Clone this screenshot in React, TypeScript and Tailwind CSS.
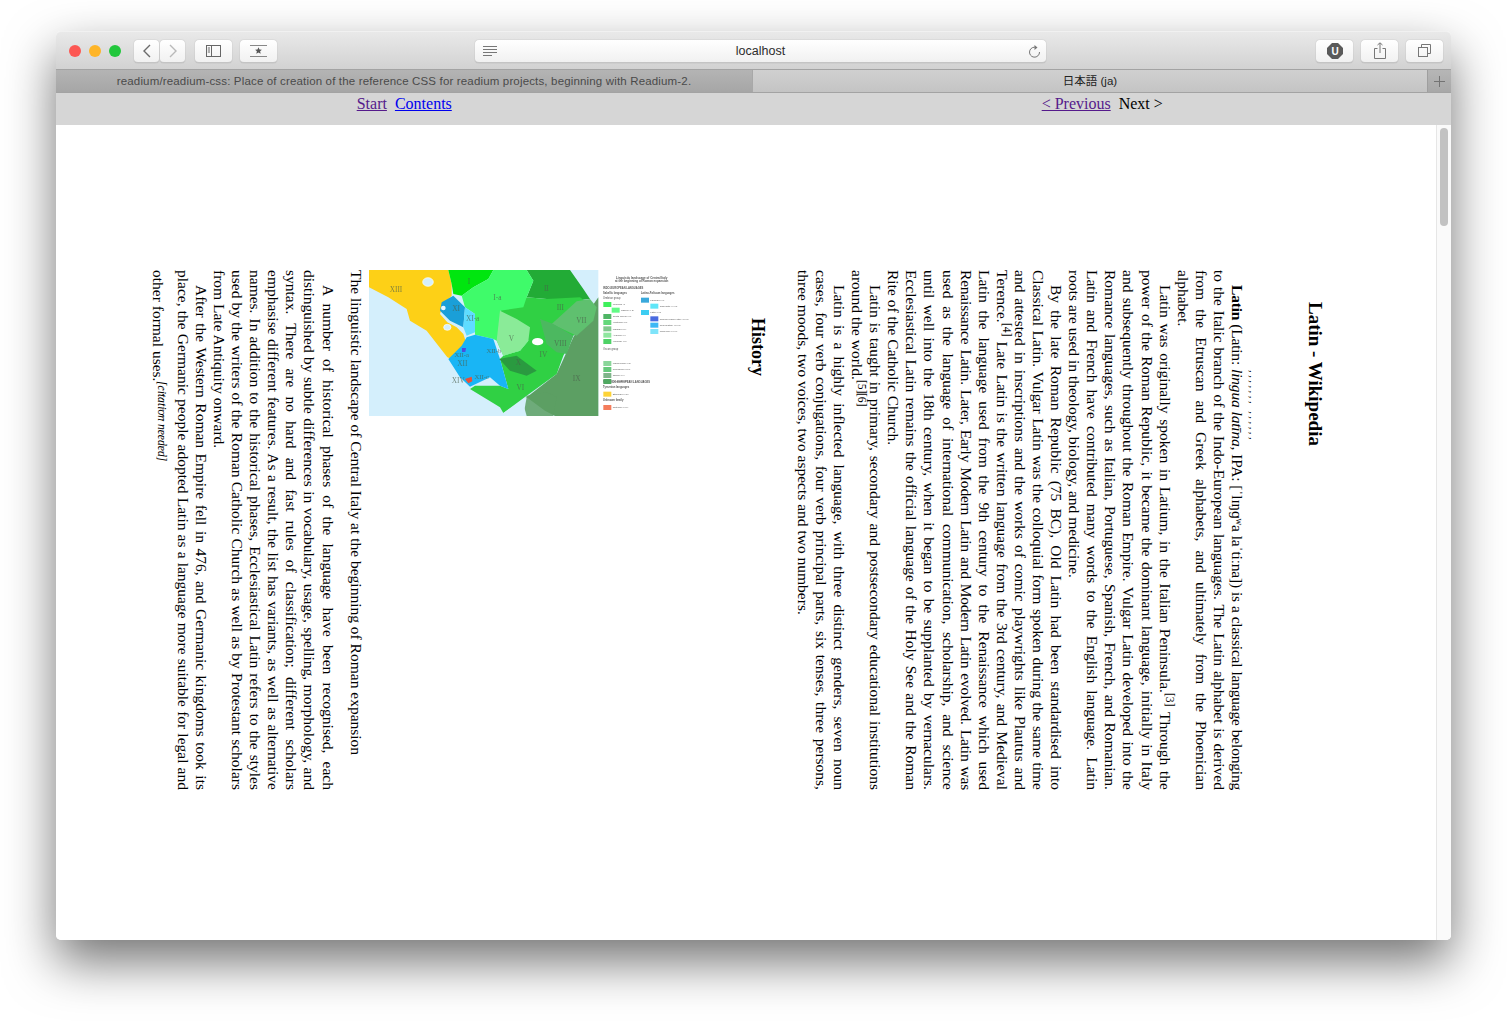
import React from 'react'

// one typeset line of the vertical text
function L({ children, indent, plain, className }: { children: React.ReactNode; indent?: boolean; plain?: boolean; className?: string }) {
  return (
    <div className={`${indent ? '[text-indent:15px]' : ''} ${plain ? '' : '[text-align-last:justify]'} ${className ?? ''}`}>
      {children}
    </div>
  )
}

function Ref({ children }: { children: React.ReactNode }) {
  return <sup className="top-0 left-[4px]">{children}</sup>
}

function ToolButton({ children, className }: { children: React.ReactNode; className?: string }) {
  return (
    <div className={`flex h-[23px] items-center justify-center rounded-[4px] border-b border-[#c4c4c4] bg-gradient-to-b from-white to-[#f1f1f1] shadow-[0_0_1px_rgba(0,0,0,0.35)] ${className ?? ''}`}>
      {children}
    </div>
  )
}

const legendRows: [number, number, string, string][] = [
  [730, 122, '#3ff05c', 'Umbrian (I)'],
  [755, 139, '#62fb86', 'Sabine (I-a)'],
  [730, 158, '#4fb565', 'South Picene (II)'],
  [730, 176, '#63d87a', 'Vestinian (III)'],
  [730, 195, '#7fc98c', 'Marsian (IV)'],
  [730, 214, '#8fe69f', 'Aequian (V)'],
  [730, 233, '#4ed266', 'Volscian (VI)'],
  [730, 299, '#8ad69a', 'Marrucinian (VII)'],
  [730, 317, '#66c97c', 'Paelignian (VIII)'],
  [730, 335, '#7fb58a', 'Oscan (IX)'],
  [730, 353, '#4fa861', 'Hernican (X)'],
  [730, 391, '#fdd338', 'Etruscan (XIII)'],
  [730, 431, '#f47c5c', 'Rutulian (XIV)'],
  [843, 109, '#3aa9dc', 'Faliscan (XI)'],
  [871, 127, '#5fe6f8', 'Capenate (XI-a)'],
  [843, 146, '#3dcdf2', 'Latin (XII)'],
  [871, 165, '#4a6be0', 'Roman urban Latin (XII-a)'],
  [871, 184, '#3db8f5', 'Praenestine (XII-b)'],
  [871, 203, '#7fe4fa', 'Lanuvian (XII-c)'],
]

const mapLabels: [number, number, string, number][] = [
  [327, 60, 'I', 22], [108, 85, 'XIII', 22], [412, 108, 'I-a', 22], [559, 80, 'II', 22], [601, 138, 'III', 22],
  [664, 178, 'VII', 22], [288, 140, 'XI', 22], [338, 170, 'XI-a', 22], [454, 230, 'V', 22], [601, 247, 'VIII', 22],
  [550, 280, 'IV', 22], [402, 268, 'XII-b', 20], [305, 280, 'XII-a', 20], [307, 306, 'XII', 22], [475, 303, 'X', 22],
  [650, 350, 'IX', 22], [365, 344, 'XII-c', 20], [481, 378, 'VI', 22], [295, 358, 'XIV', 22],
]

// the map of Central Italy from the article
function LatiumMap() {
  return (
    <svg width="324" height="146" viewBox="27 18 972 438" className="block h-[146px] w-[324px] blur-[0.5px] [writing-mode:horizontal-tb]">
      <rect x="27" y="18" width="972" height="438" fill="#ffffff" />
      <rect x="27" y="18" width="688" height="438" fill="#d4effc" />
      <polygon fill="#5c9f63" points="715,100 715,456 585,456 555,440 500,400 590,330 640,220 680,150" />
      <polygon fill="#22ab36" points="500,18 630,18 670,75 690,105 640,110 560,105 500,100 520,50" />
      <polygon fill="#30d044" points="500,100 560,105 660,100 700,130 690,170 640,215 610,275 590,330 500,395 430,447 420,430 330,375 345,365 420,365 445,375 420,285 430,275 480,260 505,230 420,140" />
      <polygon fill="#5fc06f" points="650,112 690,105 710,130 700,170 650,215 575,180" />
      <polygon fill="#4cb860" points="540,165 580,180 640,215 620,270 590,265 560,240" />
      <polygon fill="#5c9f63" points="500,395 560,385 590,400 580,456 500,456 490,420" opacity="0.85" />
      <polygon fill="#d4effc" points="430,447 500,400 490,456 430,456" />
      <polygon fill="#fdd017" points="27,18 265,18 275,60 275,95 250,120 240,150 262,175 290,190 310,210 320,240 300,260 275,285 262,280 200,200 150,170 140,135 85,100 27,70" />
      <polygon fill="#00e60f" points="265,18 400,18 385,45 340,70 305,95 280,90 275,60" />
      <polygon fill="#3ffb6a" points="400,18 500,18 520,50 500,100 490,130 420,140 505,230 480,260 430,275 410,230 400,225 345,212 345,150 315,130 305,95 340,70 385,45" />
      <polygon fill="#8aeb98" points="420,140 470,165 510,190 505,230 480,260 430,275 410,230" />
      <polygon fill="#1a9fd8" points="245,115 280,95 315,130 310,190 270,170 240,140" />
      <polygon fill="#5fdcff" points="315,130 345,150 345,205 320,215 310,190" />
      <polygon fill="#19b5f5" points="320,220 345,212 400,225 420,285 445,375 420,365 390,340 330,368 300,340 265,285 305,245" />
      <polygon fill="#2a9a40" points="418,285 470,275 530,320 500,335 450,320" />
      <polygon fill="#e8503a" points="315,345 335,338 337,352 325,358" />
      <polygon fill="#4a4fe0" points="306,252 318,252 316,264 306,264" />
      <ellipse cx="204" cy="54" rx="16" ry="13" fill="#d4effc" stroke="#ffffff" strokeWidth="2" />
      <ellipse cx="262" cy="190" rx="11" ry="9" fill="#d4effc" stroke="#ffffff" strokeWidth="2" />
      <ellipse cx="250" cy="132" rx="7" ry="7" fill="#e8f8ff" />
      <ellipse cx="533" cy="233" rx="17" ry="11" fill="#ffffff" />
      <g fontFamily="'Liberation Serif', serif" fill="#4b5f4b" fillOpacity="0.7" textAnchor="middle">
        {mapLabels.map(([x, y, t, s]) => (
          <text key={t} x={x} y={y} fontSize={s}>{t}</text>
        ))}
      </g>
      <g fontFamily="'Liberation Sans', sans-serif" fill="#555555" fontSize="8">
        <text x="845" y="45" textAnchor="middle" fontWeight="700" fontSize="9">Linguistic landscape of Central Italy</text>
        <text x="845" y="54" textAnchor="middle" fontWeight="700" fontSize="9">at the beginning of Roman expansion</text>
        <text x="729" y="76" fontWeight="700">INDO-EUROPEAN LANGUAGES</text>
        <text x="729" y="89" fontWeight="700">Sabellic languages</text>
        <text x="843" y="89" fontWeight="700">Latino-Faliscan languages</text>
        <text x="729" y="104">Umbrian group</text>
        <text x="729" y="257">Oscan group</text>
        <text x="729" y="358" fontWeight="700">NON-INDO-EUROPEAN LANGUAGES</text>
        <text x="729" y="372" fontWeight="700">Tyrsenian languages</text>
        <text x="729" y="412" fontWeight="700">Unknown family</text>
        {legendRows.map(([x, y, c, t]) => (
          <g key={t}>
            <rect x={x} y={y - 8} width="24" height="15" fill={c} />
            <text x={x + 28} y={y + 2} fontSize="7.5">{t}</text>
          </g>
        ))}
      </g>
    </svg>
  )
}

export default function App() {
  return (
    <div className="h-[1021px] overflow-hidden bg-white pl-[56px] pt-[31px] font-['Liberation_Sans',sans-serif]">
      <div className="flex h-[909px] w-[1395px] flex-col rounded-[5px] bg-white shadow-[0_22px_50px_0_rgba(0,0,0,0.55)]">
        {/* toolbar */}
        <div className="flex h-[38px] flex-none items-center rounded-t-[5px] border-t border-[#f1f1f1] bg-gradient-to-b from-[#e9e9e9] to-[#d2d2d2] pl-[13px] pr-[8px] pt-[1px]">
          <div className="-mt-[1px] flex gap-[8px]">
            <span className="h-[12px] w-[12px] rounded-full bg-[#fc5753]" />
            <span className="h-[12px] w-[12px] rounded-full bg-[#feb528]" />
            <span className="h-[12px] w-[12px] rounded-full bg-[#22c73c]" />
          </div>
          <ToolButton className="ml-[13px] w-[25px]">
            <svg width="10" height="14" viewBox="0 0 10 14" fill="none" stroke="#6b6b6b" strokeWidth="1.4"><path d="M8 1 2 7l6 6" /></svg>
          </ToolButton>
          <ToolButton className="ml-[1px] w-[25px]">
            <svg width="10" height="14" viewBox="0 0 10 14" fill="none" stroke="#b9b9b9" strokeWidth="1.4"><path d="m2 1 6 6-6 6" /></svg>
          </ToolButton>
          <ToolButton className="ml-[10px] w-[37px]">
            <svg width="15" height="12" viewBox="0 0 15 12" fill="none" stroke="#666666"><rect x="0.5" y="0.5" width="14" height="11" /><path d="M5.5 0.5v11M1.8 3h2.2M1.8 5h2.2M1.8 7h2.2" /></svg>
          </ToolButton>
          <ToolButton className="ml-[8px] w-[37px]">
            <svg width="17" height="12" viewBox="0 0 17 12"><path d="M0 .5h17M0 11.5h17" stroke="#888888" /><path d="m8.5 2.2 1 2.3 2.4.2-1.8 1.6.6 2.4-2.2-1.3-2.2 1.3.6-2.4-1.8-1.6 2.4-.2z" fill="#555555" /></svg>
          </ToolButton>
          <ToolButton className="relative ml-[198px] w-[571px]">
            <svg className="absolute left-[8px] top-[6px]" width="14" height="11" viewBox="0 0 14 11" stroke="#777777"><path d="M0 .5h14M0 3.5h14M0 6.5h14M0 9.5h9" /></svg>
            <span className="pt-[2px] text-[12.5px] text-[#2c2c2c]">localhost</span>
            <svg className="absolute right-[5px] top-[4px]" width="13" height="15" viewBox="0 0 13 15" fill="none" stroke="#777777"><path d="M8.5 3.6A5 5 0 1 0 11.5 8" /><path d="M6.5 1 9.5 3.6 6.5 6z" fill="#777777" stroke="none" /></svg>
          </ToolButton>
          <div className="ml-auto flex gap-[8px]">
            <ToolButton className="w-[37px]">
              <svg width="16" height="16" viewBox="0 0 16 16">
                <polygon points="5,0 11,0 16,5 16,11 11,16 5,16 0,11 0,5" fill="#5a5a5a" />
                <text x="8" y="11.5" textAnchor="middle" fontSize="10" fontWeight="700" fill="#ffffff" fontFamily="'Liberation Sans', sans-serif">U</text>
              </svg>
            </ToolButton>
            <ToolButton className="w-[37px]">
              <svg width="12" height="17" viewBox="0 0 12 17" fill="none" stroke="#777777"><path d="M3.5 6.5h-3v10h11v-10h-3M6 11V1M3.5 3 6 .8 8.5 3" /></svg>
            </ToolButton>
            <ToolButton className="w-[37px]">
              <svg width="13" height="13" viewBox="0 0 13 13" fill="none" stroke="#777777"><rect x="0.5" y="3.5" width="9" height="9" /><path d="M3.5 3.5v-3h9v9h-3" /></svg>
            </ToolButton>
          </div>
        </div>

        {/* tabs */}
        <div className="flex h-[24px] flex-none border-y border-y-[#a3a3a3] text-[11.5px]">
          <div className="flex w-[696px] items-center justify-center bg-gradient-to-b from-[#b4b4b4] to-[#a6a6a6] pt-[1px] tracking-[0.16px] text-[#4a4a4a]">
            readium/readium-css: Place of creation of the reference CSS for readium projects, beginning with Readium-2.
          </div>
          <div className="flex flex-1 items-center justify-center border-l border-[#a8a8a8] bg-gradient-to-b from-[#d0d0d0] to-[#c4c4c4] pt-[1px] font-['Liberation_Sans','Noto_Sans_CJK_JP',sans-serif] text-[#222222]">
            日本語 (ja)
          </div>
          <div className="flex w-[24px] items-center justify-center border-l border-[#9f9f9f] bg-gradient-to-b from-[#b6b6b6] to-[#a8a8a8]">
            <svg width="11" height="11" viewBox="0 0 11 11" stroke="#737373"><path d="M5.5 0v11M0 5.5h11" /></svg>
          </div>
        </div>

        {/* reader nav */}
        <div className="grid h-[32px] flex-none grid-cols-2 bg-[#d6d6d6] pt-[2px] font-['Liberation_Serif',serif] text-[16px] leading-[18px]">
          <div className="flex justify-center gap-[8px] pr-[1px]">
            <a href="#" className="text-[#551a8b] underline">Start</a>
            <a href="#" className="text-[#0000ee] underline">Contents</a>
          </div>
          <div className="flex justify-center gap-[8px]">
            <a href="#" className="text-[#551a8b] underline">&lt; Previous</a>
            <span className="text-black">Next &gt;</span>
          </div>
        </div>

        {/* page */}
        <div className="flex min-h-0 flex-1 rounded-b-[5px] bg-white">
          <div className="flex flex-1 justify-end overflow-hidden pr-[110px] pt-[145px]">
            <article className="h-[520px] font-['Liberation_Serif',serif] text-[15.5px] leading-[18.1px] text-black [writing-mode:vertical-rl]">
              <h1 className="ml-[45px] pt-[32px] text-[19px] font-bold leading-[22px]">Latin - Wikipedia</h1>
              <div className="ml-[3px] pt-[100px] text-[11px] italic leading-[10px] tracking-[2.4px]">,,,,,,, ,,,,,,</div>

              <L indent className="tracking-[-0.2px]"><b>Latin</b> (Latin: <i>lingua latīna</i>, IPA: [ˈlɪŋɡʷa laˈtiːna]) is a classical language belonging</L>
              <L>to the Italic branch of the Indo-European languages. The Latin alphabet is derived</L>
              <L>from the Etruscan and Greek alphabets, and ultimately from the Phoenician</L>
              <L plain>alphabet.</L>
              <L indent>Latin was originally spoken in Latium, in the Italian Peninsula.<Ref>[3]</Ref> Through the</L>
              <L>power of the Roman Republic, it became the dominant language, initially in Italy</L>
              <L>and subsequently throughout the Roman Empire. Vulgar Latin developed into the</L>
              <L>Romance languages, such as Italian, Portuguese, Spanish, French, and Romanian.</L>
              <L>Latin and French have contributed many words to the English language. Latin</L>
              <L plain>roots are used in theology, biology, and medicine.</L>
              <L indent>By the late Roman Republic (75 BC), Old Latin had been standardised into</L>
              <L>Classical Latin. Vulgar Latin was the colloquial form spoken during the same time</L>
              <L>and attested in inscriptions and the works of comic playwrights like Plautus and</L>
              <L>Terence.<Ref>[4]</Ref> Late Latin is the written language from the 3rd century, and Medieval</L>
              <L>Latin the language used from the 9th century to the Renaissance which used</L>
              <L className="tracking-[-0.2px]">Renaissance Latin. Later, Early Modern Latin and Modern Latin evolved. Latin was</L>
              <L>used as the language of international communication, scholarship, and science</L>
              <L>until well into the 18th century, when it began to be supplanted by vernaculars.</L>
              <L>Ecclesiastical Latin remains the official language of the Holy See and the Roman</L>
              <L plain>Rite of the Catholic Church.</L>
              <L indent>Latin is taught in primary, secondary and postsecondary educational institutions</L>
              <L plain>around the world.<Ref>[5]</Ref><Ref>[6]</Ref></L>
              <L indent>Latin is a highly inflected language, with three distinct genders, seven noun</L>
              <L>cases, four verb conjugations, four verb principal parts, six tenses, three persons,</L>
              <L plain>three moods, two voices, two aspects and two numbers.</L>

              <h2 className="ml-[55px] mr-[26px] pt-[48px] text-[18px] font-bold leading-[20px]">History</h2>

              <LatiumMap />
              <L plain className="ml-[10px] mr-[4px]">The linguistic landscape of Central Italy at the beginning of Roman expansion</L>

              <L indent>A number of historical phases of the language have been recognised, each</L>
              <L>distinguished by subtle differences in vocabulary, usage, spelling, morphology, and</L>
              <L>syntax. There are no hard and fast rules of classification; different scholars</L>
              <L>emphasise different features. As a result, the list has variants, as well as alternative</L>
              <L>names. In addition to the historical phases, Ecclesiastical Latin refers to the styles</L>
              <L>used by the writers of the Roman Catholic Church as well as by Protestant scholars</L>
              <L plain>from Late Antiquity onward.</L>
              <L indent>After the Western Roman Empire fell in 476, and Germanic kingdoms took its</L>
              <L>place, the Germanic people adopted Latin as a language more suitable for legal and</L>
              <L plain className="mr-[7px]">
                other formal uses.
                <sup className="top-0 left-[3px] italic">
                  [citation needed]
                  <span className="absolute left-[11px] top-[7px] whitespace-nowrap text-[9px] tracking-[3px]">,,,,,,,,,,,,,</span>
                </sup>
              </L>
            </article>
          </div>

          {/* scrollbar */}
          <div className="w-[15px] flex-none rounded-br-[5px] border-l border-[#e6e6e6] bg-[#fafafa] pl-[3px] pt-[3px]">
            <div className="h-[98px] w-[8px] rounded-full bg-[#c2c2c2]" />
          </div>
        </div>
      </div>
    </div>
  )
}
